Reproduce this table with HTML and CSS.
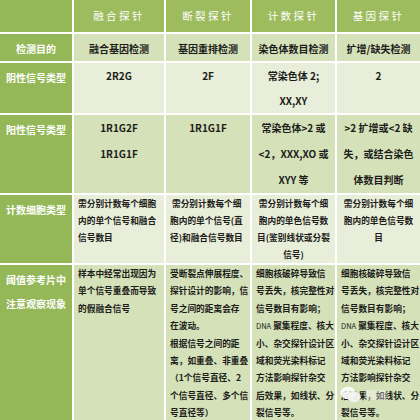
FILE: index.html
```html
<!DOCTYPE html>
<html lang="zh">
<head>
<meta charset="utf-8">
<link rel="stylesheet" href="styles.css">
</head>
<body>
<div class="page">
<table class="grid">
  <colgroup>
    <col class="c0"><col class="c1"><col class="c2"><col class="c3"><col class="c4">
  </colgroup>
  <tr class="head">
    <td class="lab"></td>
    <td>融合探针</td>
    <td>断裂探针</td>
    <td>计数探针</td>
    <td>基因探针</td>
  </tr>
  <tr class="r1 dark">
    <td class="lab">检测目的</td>
    <td class="mid">融合基因检测</td>
    <td class="mid">基因重排检测</td>
    <td class="mid">染色体数目检测</td>
    <td class="mid">扩增/缺失检测</td>
  </tr>
  <tr class="r2 light">
    <td class="lab">阴性信号类型</td>
    <td class="mid">2R2G</td>
    <td class="mid">2F</td>
    <td class="mid">常染色体 2;<br>XX,XY</td>
    <td class="mid">2</td>
  </tr>
  <tr class="r3 dark">
    <td class="lab">阳性信号类型</td>
    <td class="mid">1R1G2F<br>1R1G1F</td>
    <td class="mid">1R1G1F</td>
    <td class="mid">常染色体&gt;2 或<br>&lt;2，XXX,XO 或<br>XYY 等</td>
    <td class="mid">&gt;2 扩增或&lt;2 缺<br>失，或结合染色<br>体数目判断</td>
  </tr>
  <tr class="r4 light">
    <td class="lab">计数细胞类型</td>
    <td class="sm">需分别计数每个细胞<br>内的单个信号和融合<br>信号数目</td>
    <td class="sm">&nbsp;需分别计数每个细<br>胞内的单个信号(直<br>径)和融合信号数目</td>
    <td class="sm ctr">需分别计数每个细<br>胞内的单色信号数<br>目(鉴别线状或分裂<br>信号)</td>
    <td class="sm ctr">需分别计数每个细<br>胞内的单色信号数<br>目</td>
  </tr>
  <tr class="r5 dark">
    <td class="lab two">阈值参考片中<br>注意观察现象</td>
    <td class="sm">样本中经常出现因为<br>单个信号重叠而导致<br>的假融合信号</td>
    <td class="sm">受断裂点伸展程度、<br>探针设计的影响，信<br>号之间的距离会存<br>在波动。<br>根据信号之间的距<br>离，如重叠、非重叠<br>（1个信号直径、2<br>个信号直径、多个信<br>号直径等）</td>
    <td class="sm">细胞核破碎导致信<br>号丢失，核完整性对<br>信号数目有影响；<br><span class="tiny">DNA</span> 聚集程度、核大<br>小、杂交探针设计区<br>域和荧光染料标记<br>方法影响探针杂交<br>后效果，如线状、分<br>裂信号等。</td>
    <td class="sm">细胞核破碎导致信<br>号丢失，核完整性对<br>信号数目有影响；<br><span class="tiny">DNA</span> 聚集程度、核大<br>小、杂交探针设计区<br>域和荧光染料标记<br>方法影响探针杂交<br>后效果，如线状、分<br>裂信号等。</td>
  </tr>
</table>
<div class="mark">
  <svg width="22" height="18" viewBox="0 0 22 18">
    <ellipse cx="8" cy="7" rx="7.5" ry="6.2" fill="#ffffff" fill-opacity="0.9"/>
    <ellipse cx="14" cy="11" rx="6.5" ry="5.4" fill="#f4f4f0" fill-opacity="0.95" stroke="#d9dfcc" stroke-width="0.6"/>
    <circle cx="5.5" cy="5.5" r="0.9" fill="#c8cfbd"/>
    <circle cx="10" cy="5.5" r="0.9" fill="#c8cfbd"/>
  </svg>
  <span class="blur"></span>
</div>
</div>
</body>
</html>
```

FILE: styles.css
```css
html, body {
  margin: 0;
  padding: 0;
  width: 420px;
  height: 420px;
  overflow: hidden;
  background: #d6e2bc;
}

.page {
  position: relative;
  width: 420px;
  height: 420px;
  overflow: hidden;
}

.grid {
  width: 420px;
  table-layout: fixed;
  border-collapse: collapse;
  border-style: hidden;
  font-family: "Noto Sans CJK SC", "Noto Sans", sans-serif;
  color: #1c1c1a;
}

.c0 { width: 73px; }
.c1 { width: 92px; }
.c2 { width: 86px; }
.c3 { width: 85px; }
.c4 { width: 84px; }

.grid td {
  border: 2px solid #ffffff;
  padding: 0;
  vertical-align: top;
  white-space: nowrap;
  overflow: hidden;
}

.head td {
  background: #9cbc5d;
  color: #ffffff;
  font-size: 10.5px;
  letter-spacing: 2.4px;
  line-height: 32px;
  text-align: center;
  font-weight: 400;
}

.dark td { background: #d5e1b9; }
.light td { background: #e8eed9; }

.grid td.lab {
  background: #94b857;
  color: #ffffff;
  font-size: 10px;
  font-weight: 700;
  text-align: center;
  line-height: 25px;
  padding-top: 2px;
}

.grid td.lab.two {
  line-height: 24px;
  padding-top: 3px;
}

.mid {
  font-size: 10px;
  font-weight: 700;
  text-align: center;
  line-height: 25px;
}

.r1 .mid { padding-top: 2px; }
.r3 .mid { line-height: 26px; }

.sm {
  font-size: 8.7px;
  font-weight: 700;
  line-height: 17.4px;
  text-align: left;
}

.grid td.sm { padding: 0 2px 0 4px; }
.grid .r4 td.sm { line-height: 17px; }
.grid td.sm.ctr { text-align: center; padding-left: 2px; }

.tiny {
  font-size: 7.5px;
  font-weight: 400;
}

.mark {
  position: absolute;
  left: 340px;
  top: 386px;
  display: flex;
  align-items: center;
  gap: 2px;
}

.blur {
  display: block;
  width: 24px;
  height: 10px;
  border-radius: 5px;
  background: rgba(255, 255, 255, 0.35);
}
```
